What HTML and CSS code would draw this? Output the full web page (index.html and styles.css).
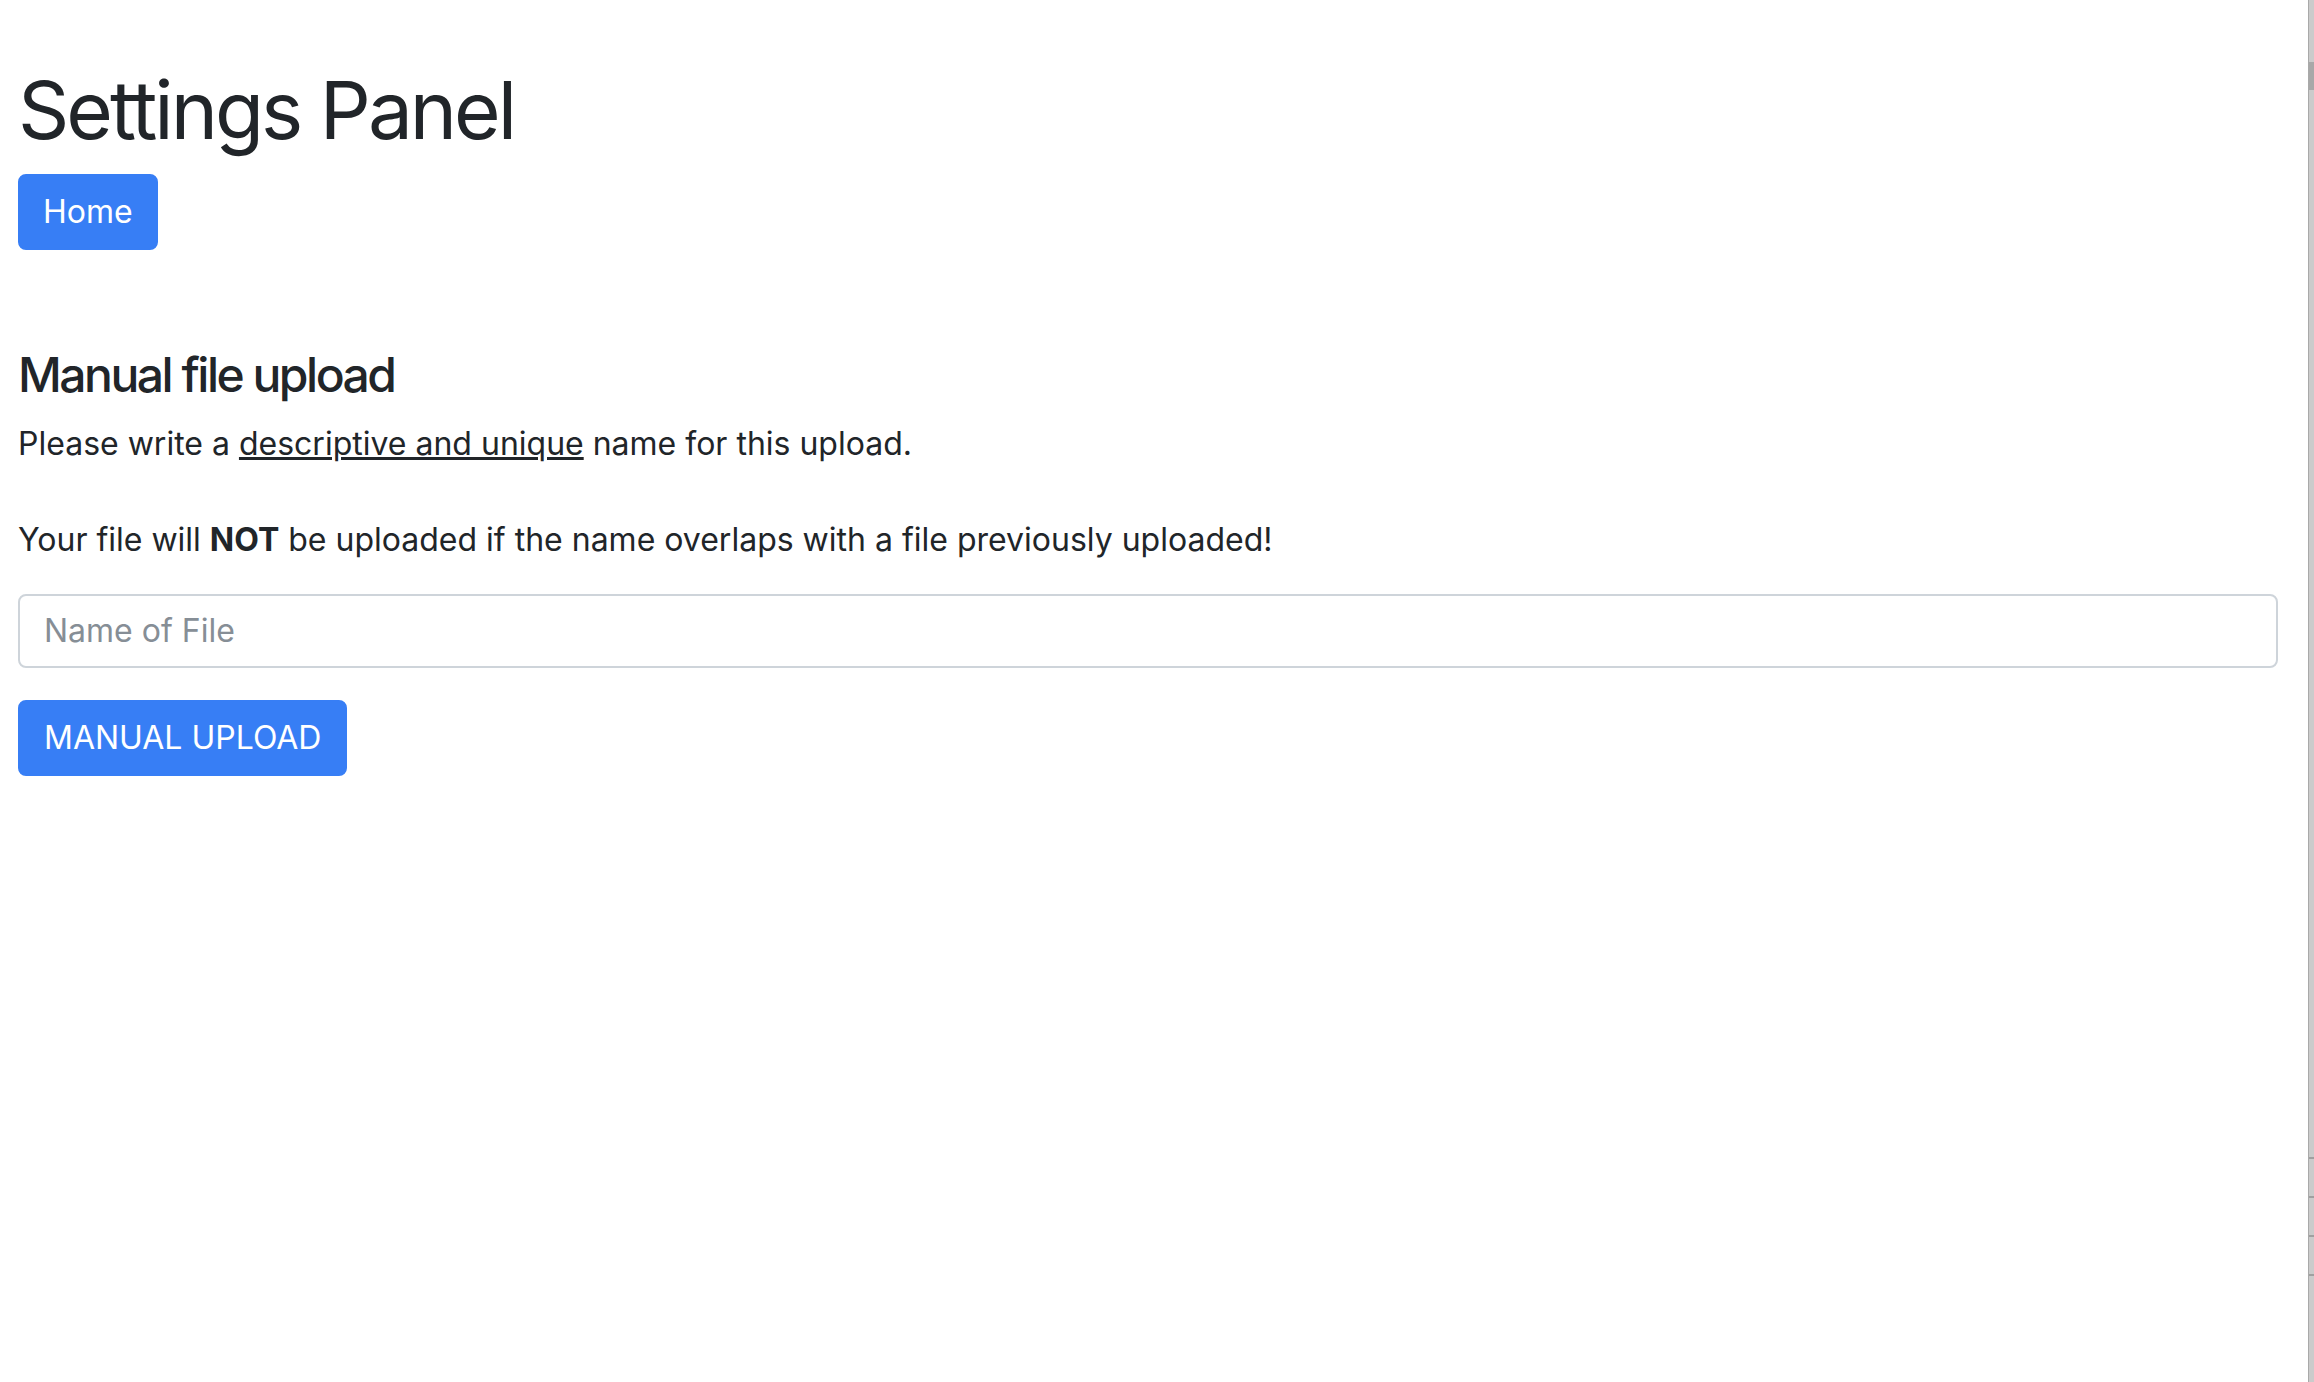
FILE: index.html
```html
<!DOCTYPE html>
<html lang="en">
<head>
<meta charset="utf-8">
<title>Settings Panel</title>
<link rel="stylesheet" href="styles.css">
</head>
<body>
<main class="page">
  <h1 class="title">Settings Panel</h1>
  <a class="btn" href="#">Home</a>
  <section class="upload">
    <h4 class="upload-title">Manual file upload</h4>
    <p class="note">Please write a <u>descriptive and unique</u> name for this upload.</p>
    <p class="note warn">Your file will <b>NOT</b> be uploaded if the name overlaps with a file previously uploaded!</p>
    <input class="field" type="text" placeholder="Name of File">
    <button class="btn btn-upload" type="button">MANUAL UPLOAD</button>
  </section>
</main>
<div class="edge">
  <div class="edge-thumb"></div>
  <div class="edge-marks">
    <span class="mark"></span>
    <span class="mark"></span>
    <span class="mark"></span>
    <span class="mark"></span>
  </div>
</div>
</body>
</html>
```

FILE: styles.css
```css
html, body {
  margin: 0;
  padding: 0;
}
body {
  display: flex;
  min-height: 100vh;
  background: #ffffff;
  color: #212529;
  font-family: Inter, "Noto Sans", sans-serif;
  font-size: 32px;
  line-height: 1.5;
}
.page {
  flex: 1;
  padding: 62px 30px 0 18px;
  display: flex;
  flex-direction: column;
  align-items: flex-start;
}
.title {
  margin: 0 0 16px;
  font-size: 80px;
  font-weight: 400;
  line-height: 1.2;
  letter-spacing: -3px;
}
.btn {
  display: inline-block;
  box-sizing: border-box;
  height: 76px;
  padding: 12px 23px;
  border: 2px solid #377ef5;
  border-radius: 8px;
  background: #377ef5;
  color: #ffffff;
  font-family: inherit;
  font-size: 32px;
  line-height: 48px;
  text-decoration: none;
}
.upload {
  align-self: stretch;
  display: flex;
  flex-direction: column;
  align-items: flex-start;
  margin-top: 96px;
}
.upload-title {
  margin: 0 0 16px;
  font-size: 48px;
  font-weight: 500;
  line-height: 1.2;
  letter-spacing: -2.5px;
}
.note {
  margin: 0 0 48px;
}
.note.warn {
  margin-bottom: 30px;
}
.note b {
  font-weight: 700;
}
.field {
  align-self: stretch;
  box-sizing: border-box;
  height: 74px;
  margin: 0 0 32px;
  padding: 12px 24px;
  border: 2px solid #ced4da;
  border-radius: 8px;
  font-family: inherit;
  font-size: 32px;
  line-height: 46px;
  color: #495057;
  background: #fff;
}
.field::placeholder {
  color: #868e96;
}
.btn-upload {
  cursor: pointer;
  padding-left: 24px;
  padding-right: 24px;
}
.edge {
  width: 6px;
  flex: none;
  background: #cbcbcb;
  border-left: 1px solid #a9a9a9;
  box-sizing: border-box;
  display: flex;
  flex-direction: column;
  padding-top: 62px;
}
.edge-thumb {
  height: 28px;
  background: #a8a8a8;
}
.edge-marks {
  margin-top: 1067px;
  display: flex;
  flex-direction: column;
  gap: 37px;
}
.mark {
  display: block;
  height: 2px;
  background: #a0a0a0;
}
```
